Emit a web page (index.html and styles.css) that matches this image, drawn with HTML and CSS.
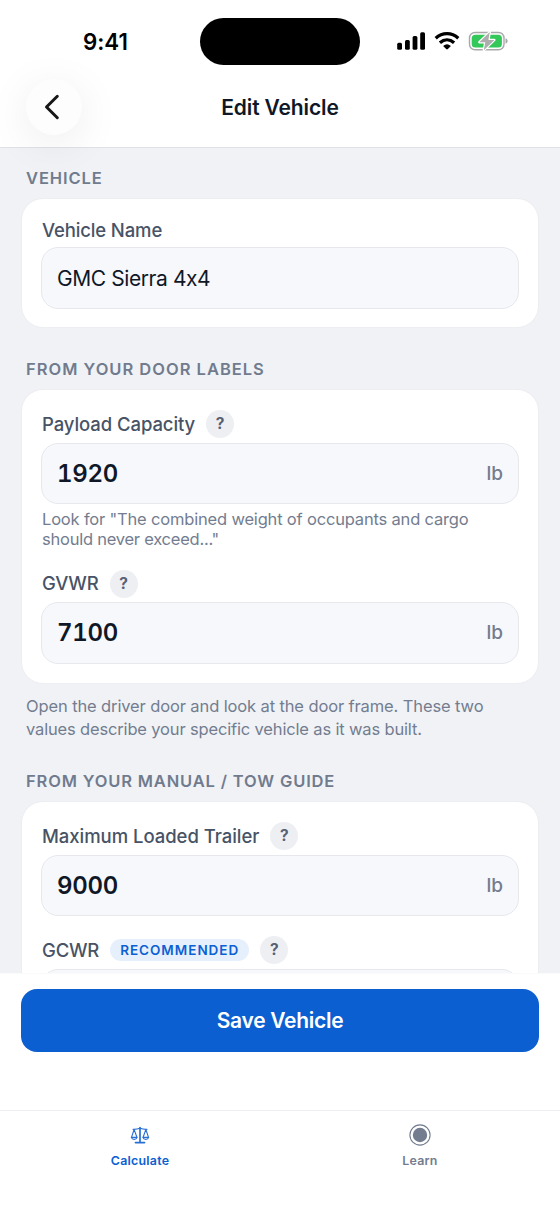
FILE: index.html
```html
<!DOCTYPE html>
<html lang="en">
<head>
<meta charset="utf-8">
<title>Edit Vehicle</title>
<link rel="stylesheet" href="styles.css">
</head>
<body>
<div class="screen">
  <header class="header">
    <div class="status">
      <div class="time"><span>9:41</span></div>
      <div class="island"></div>
      <svg class="indicators" width="120" height="24" viewBox="0 0 120 24">
        <g fill="#000">
          <rect x="2.2" y="13.8" width="4.8" height="7" rx="1.5"/>
          <rect x="10" y="11" width="4.8" height="9.8" rx="1.5"/>
          <rect x="17.6" y="7" width="4.8" height="13.8" rx="1.5"/>
          <rect x="25.2" y="3.2" width="4.8" height="17.6" rx="1.5"/>
        </g>
        <g fill="none" stroke="#000" stroke-width="3.3">
          <path d="M40.7 9.2C47.3 3.2 56.7 3.2 63.3 9.2"/>
          <path d="M44.9 13.7C49.2 9.9 54.8 9.9 59.1 13.7"/>
        </g>
        <path d="M48.1 16.9Q52 13.7 55.9 16.9L52.9 20Q52 20.9 51.1 20Z" fill="#000"/>
        <rect x="74.5" y="3.5" width="34.5" height="17.3" rx="5.5" fill="none" stroke="#a9a9a9" stroke-width="1.4"/>
        <path d="M110.5 9.2Q112.7 10 112.7 12T110.5 14.8Z" fill="#a9a9a9"/>
        <rect x="76.7" y="5.7" width="30.2" height="12.9" rx="3.6" fill="#34c759"/>
        <path d="M94.8 3L84.3 13.2H90.3L88.8 21.2L99.4 11H93.4Z" fill="#adadad" stroke="#fff" stroke-width="2.4" stroke-linejoin="round" paint-order="stroke"/>
      </svg>
    </div>
    <div class="nav">
      <button class="back" aria-label="Back"><svg width="20" height="28" viewBox="0 0 20 28"><path d="M15.3 3.3L4.5 14L15.3 24.7" fill="none" stroke="#171717" stroke-width="3" stroke-linecap="round" stroke-linejoin="round"/></svg></button>
      <h1 class="title"><span>Edit Vehicle</span></h1>
    </div>
  </header>

  <main class="content">
    <h2 class="section s1"><span>VEHICLE</span></h2>
    <section class="card card-name">
      <div class="label-row plain"><span class="label l-name">Vehicle Name</span></div>
      <div class="field"><span class="text-value">GMC Sierra 4x4</span></div>
    </section>

    <h2 class="section s2"><span>FROM YOUR DOOR LABELS</span></h2>
    <section class="card card-door">
      <div class="label-row"><span class="label l-payload">Payload Capacity</span><span class="help">?</span></div>
      <div class="field"><span class="value v1">1920</span><span class="unit">lb</span></div>
      <p class="hint"><span class="h1">Look for "The combined weight of occupants and cargo</span><br><span class="h2">should never exceed..."</span></p>
      <div class="label-row"><span class="label l-gvwr">GVWR</span><span class="help">?</span></div>
      <div class="field"><span class="value v2">7100</span><span class="unit">lb</span></div>
    </section>
    <p class="note"><span class="n1">Open the driver door and look at the door frame. These two</span><br><span class="n2">values describe your specific vehicle as it was built.</span></p>

    <h2 class="section s3"><span>FROM YOUR MANUAL / TOW GUIDE</span></h2>
    <section class="card card-manual">
      <div class="label-row"><span class="label l-trailer">Maximum Loaded Trailer</span><span class="help">?</span></div>
      <div class="field"><span class="value v3">9000</span><span class="unit">lb</span></div>
      <div class="label-row gcwr"><span class="label l-gcwr">GCWR</span><span class="badge"><span>RECOMMENDED</span></span><span class="help">?</span></div>
      <div class="field"></div>
    </section>
  </main>

  <div class="actions"><button class="save"><span>Save Vehicle</span></button></div>

  <nav class="tabs">
    <a class="tab active">
      <svg width="24" height="24" viewBox="0 0 24 24" fill="none" stroke="#2a6fd3" stroke-width="1.1" stroke-linecap="round" stroke-linejoin="round">
        <path d="M12 4.5V19" stroke-width="1.7"/><path d="M7.5 19.6H16.5" stroke-width="1.7"/>
        <path d="M5 6.3Q8.5 6.5 12 5.3Q15.5 6.5 19 6.3"/>
        <path d="M6.1 6.5L3.5 14.3M6.1 6.5L8.9 14.3M17.9 6.5L15.1 14.3M17.9 6.5L20.5 14.3"/>
        <path d="M3.3 14.4H9.1Q8.5 16.4 6.2 16.4T3.3 14.4ZM14.9 14.4H20.7Q20.1 16.4 17.8 16.4T14.9 14.4Z"/>
      </svg>
      <span class="t1">Calculate</span>
    </a>
    <a class="tab">
      <svg width="24" height="24" viewBox="0 0 24 24"><circle cx="12" cy="12" r="10.1" fill="none" stroke="#737d8f" stroke-width="1.1"/><circle cx="12" cy="12" r="7.2" fill="#737d8f"/></svg>
      <span class="t2">Learn</span>
    </a>
  </nav>
</div>
</body>
</html>
```
FILE: styles.css
```css
* { box-sizing: border-box; margin: 0; padding: 0; }
body { font-family: Inter, "Liberation Sans", sans-serif; background: #fff; font-feature-settings: "calt" 0; }
button { border: 0; font-family: inherit; }
.screen { width: 560px; height: 1216px; display: flex; flex-direction: column; overflow: hidden; background: #fff; }
.header { height: 148px; flex: none; border-bottom: 1px solid #e0e1e5; position: relative; z-index: 1; }
.status { height: 79px; padding-top: 18px; display: grid; grid-template-columns: 200px 160px 200px; }
.time { padding-left: 83px; font-size: 22.3px; line-height: 47px; font-weight: 600; }
.island { height: 47px; border-radius: 24px; background: #000; }
.indicators { margin: 11px 0 0 35px; }
.nav { height: 56px; padding-left: 26px; display: grid; grid-template-columns: 56px 1fr 82px; align-items: center; }
.back { width: 56px; height: 56px; border-radius: 50%; background: #fdfdfd; display: grid; place-items: center; box-shadow: 0 8px 44px rgba(0, 0, 0, .08); }
.back svg { margin-right: 4px; }
.title { text-align: center; font-size: 21px; font-weight: 600; line-height: 54px; padding-top: 2px; color: #101828; letter-spacing: -.12px; }
.content { height: 825px; flex: none; overflow: hidden; background: #f0f2f6; padding: 0 21px; }
.section { padding-left: 5px; font-size: 16.5px; line-height: 20px; font-weight: 600; color: #717b8e; letter-spacing: 1px; white-space: nowrap; }
.s1 { margin-top: 20px; letter-spacing: .9px; }
.s2 { margin-top: 31px; }
.s3 { margin-top: 30px; letter-spacing: .84px; }
.card { margin-top: 10px; padding: 20px 19px; border: 1px solid #eceef2; border-radius: 22px; background: #fff; }
.card-name { height: 130px; padding-top: 18px; }
.card-door { height: 295px; }
.card-manual { height: 300px; }
.label-row { height: 28px; display: flex; align-items: center; gap: 11px; padding-left: 1px; margin-bottom: 4.5px; }
.plain { height: 25px; padding-top: 2px; margin-bottom: 5px; }
.gcwr { margin-top: 20px; gap: 11px; }
.label { padding-bottom: 1px; font-size: 18.5px; line-height: 24px; font-weight: 500; color: #485366; letter-spacing: -.13px; white-space: nowrap; }
.l-payload { letter-spacing: -.08px; }
.l-trailer { letter-spacing: -.04px; }
.l-gcwr { letter-spacing: -.2px; }
.help { width: 28px; height: 28px; border-radius: 50%; background: #eeeff3; color: #566073; font-size: 15.5px; line-height: 28px; font-weight: 700; text-align: center; }
.field { height: 61.5px; border: 1.3px solid #e6e8ed; border-radius: 17px; background: #f7f8fc; padding: 0 15px; display: flex; align-items: center; justify-content: space-between; }
.text-value { padding-top: 2px; font-size: 21px; color: #101828; letter-spacing: -.42px; }
.value { font-size: 24px; font-weight: 600; color: #101828; font-feature-settings: "tnum", "calt" 0; letter-spacing: -.3px; }
.unit { font-size: 19px; font-weight: 500; color: #737d8f; }
.hint { margin-top: 6px; padding-left: 1px; height: 59.5px; font-size: 16.5px; line-height: 19.5px; color: #737d8f; white-space: nowrap; letter-spacing: -.18px; }
.h2 { letter-spacing: -.24px; }
.note { margin-top: 11px; padding-left: 5px; font-size: 16.5px; line-height: 23px; color: #737d8f; white-space: nowrap; letter-spacing: -.12px; }
.n2 { letter-spacing: -.16px; }
.badge { height: 22px; padding: 0 10px; border-radius: 11px; background: #e6f0fd; color: #0b60d2; font-size: 13.5px; line-height: 22px; font-weight: 600; letter-spacing: .98px; }
.actions { height: 137px; flex: none; padding: 14.5px 21px 0; background: #fff; border-top: 1px solid #fafafb; }
.save { display: block; width: 518px; height: 63px; border-radius: 16px; background: #0b5fd1; color: #fff; font-size: 21px; font-weight: 600; letter-spacing: -.28px; }
.tabs { height: 106px; flex: none; border-top: 1px solid #eceef1; display: grid; grid-template-columns: 1fr 1fr; }
.tab { display: flex; flex-direction: column; align-items: center; padding-top: 12px; gap: 5px; font-size: 12.4px; line-height: 18px; font-weight: 600; color: #737d8f; letter-spacing: .25px; }
.active { color: #0b60d2; }
```
